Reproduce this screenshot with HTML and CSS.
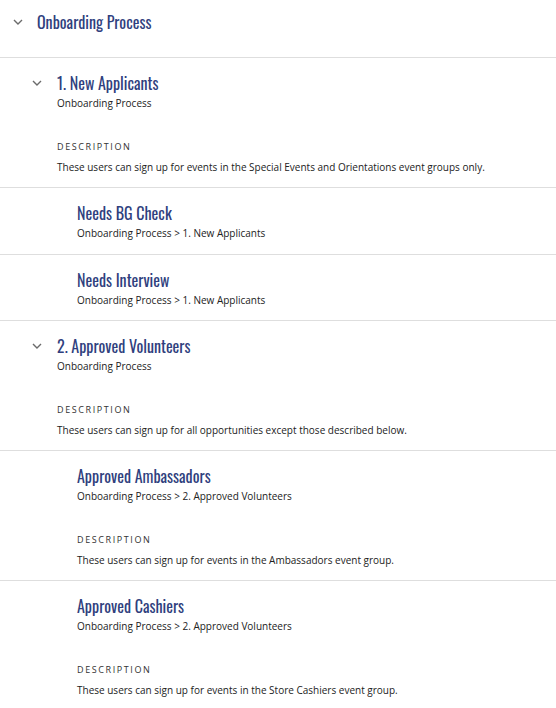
FILE: index.html
```html
<!DOCTYPE html>
<html>

<head>
	<meta charset="utf-8">
	<title>Onboarding Process</title>
	<link rel="stylesheet" href="styles.css">
</head>

<body>
	<div class="tree">
		<div class="node node-root">
			<span class="caret"><svg width="10" height="6" viewBox="0 0 10 6"><path d="M1 1l4 4 4-4" fill="none" stroke="#6b6b6b" stroke-width="1.4"/></svg></span>
			<div class="node-body">
				<div class="node-title">Onboarding Process</div>
			</div>
		</div>

		<div class="node lvl-1">
			<span class="caret"><svg width="10" height="6" viewBox="0 0 10 6"><path d="M1 1l4 4 4-4" fill="none" stroke="#6b6b6b" stroke-width="1.4"/></svg></span>
			<div class="node-body">
				<div class="node-title">1. New Applicants</div>
				<div class="node-path">Onboarding Process</div>
				<div class="desc-label">DESCRIPTION</div>
				<div class="desc-text">These users can sign up for events in the Special Events and Orientations event groups only.</div>
			</div>
		</div>

		<div class="node lvl-2">
			<span class="caret"></span>
			<div class="node-body">
				<div class="node-title">Needs BG Check</div>
				<div class="node-path">Onboarding Process &gt; 1. New Applicants</div>
			</div>
		</div>

		<div class="node lvl-2">
			<span class="caret"></span>
			<div class="node-body">
				<div class="node-title">Needs Interview</div>
				<div class="node-path">Onboarding Process &gt; 1. New Applicants</div>
			</div>
		</div>

		<div class="node lvl-1">
			<span class="caret"><svg width="10" height="6" viewBox="0 0 10 6"><path d="M1 1l4 4 4-4" fill="none" stroke="#6b6b6b" stroke-width="1.4"/></svg></span>
			<div class="node-body">
				<div class="node-title">2. Approved Volunteers</div>
				<div class="node-path">Onboarding Process</div>
				<div class="desc-label">DESCRIPTION</div>
				<div class="desc-text">These users can sign up for all opportunities except those described below.</div>
			</div>
		</div>

		<div class="node lvl-2">
			<span class="caret"></span>
			<div class="node-body">
				<div class="node-title">Approved Ambassadors</div>
				<div class="node-path">Onboarding Process &gt; 2. Approved Volunteers</div>
				<div class="desc-label">DESCRIPTION</div>
				<div class="desc-text">These users can sign up for events in the Ambassadors event group.</div>
			</div>
		</div>

		<div class="node lvl-2 node-last">
			<span class="caret"></span>
			<div class="node-body">
				<div class="node-title">Approved Cashiers</div>
				<div class="node-path">Onboarding Process &gt; 2. Approved Volunteers</div>
				<div class="desc-label">DESCRIPTION</div>
				<div class="desc-text">These users can sign up for events in the Store Cashiers event group.</div>
			</div>
		</div>
	</div>
</body>

</html>
```

FILE: styles.css
```css
body {
	margin: 0;
	background-color: #fff;
	font-family: "Open Sans", "Liberation Sans", sans-serif;
	color: #222;
}

.tree {
	width: 100%;
}

.node {
	display: flex;
	align-items: flex-start;
	padding: 13px 0 12.5px 13px;
	border-bottom: 1px solid #dedede;
}

.node-last {
	border-bottom: none;
}

.node-root {
	padding-top: 10px;
	padding-bottom: 23px;
}

.lvl-1 {
	padding-left: 32px;
}

.lvl-2 {
	padding-left: 53px;
}

.caret {
	display: flex;
	align-items: center;
	width: 24px;
	height: 24px;
	flex-shrink: 0;
}

.lvl-1 .caret {
	width: 25px;
}

.node-body {
	flex: 1;
}

.node-title {
	font-family: "Oswald", "Roboto Condensed", "Liberation Sans Narrow", "DejaVu Sans Condensed", sans-serif;
	font-size: 16px;
	line-height: 24px;
	color: #303f7e;
	font-stretch: condensed;
}

.node-path {
	font-size: 10px;
	line-height: 16px;
	color: #222;
}

.desc-label {
	margin-top: 28.5px;
	font-size: 9px;
	line-height: 14px;
	letter-spacing: 1.6px;
	color: #333;
}

.desc-text {
	margin-top: 5px;
	font-size: 10px;
	line-height: 16px;
	color: #222;
}
```
